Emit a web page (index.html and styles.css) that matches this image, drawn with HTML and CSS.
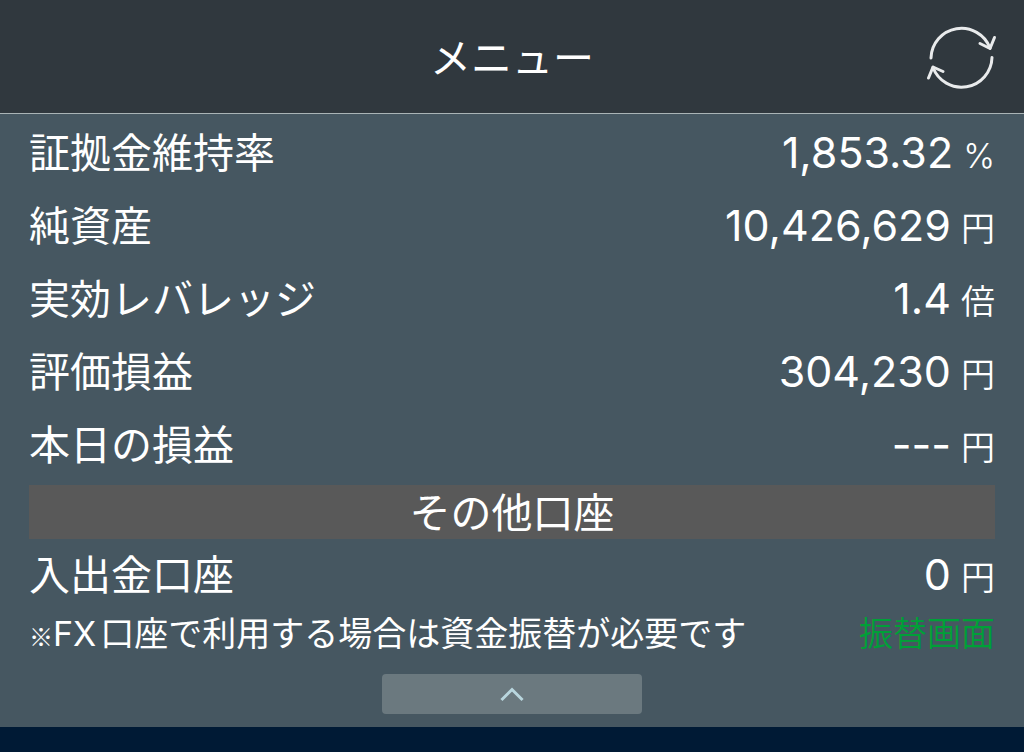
FILE: index.html
```
<!DOCTYPE html>
<html lang="ja">
<head>
    <meta charset="UTF-8">
    <meta name="viewport" content="width=device-width, initial-scale=1.0">
    <title>メニュー</title>
    <link rel="stylesheet" href="styles.css">
</head>
<body>
    <header class="header">
        <h1 class="titulo">メニュー</h1>
        <button class="refresh" type="button" aria-label="更新">
            <svg width="72" height="68" viewBox="0 0 72 68" fill="none" stroke="#e9ebec" stroke-width="3" stroke-linecap="round" stroke-linejoin="round">
                <path d="M4 35A30.500 30.500 0 0 1 63 25"/>
                <path d="M53 20.500L63 25.500L67.500 14.500"/>
                <path d="M65 34.500A30.500 30.500 0 0 1 6 44.500"/>
                <path d="M1.500 55L6 44L16 48.500"/>
            </svg>
        </button>
    </header>

    <main class="painel">
        <dl class="lista">
            <div class="linha">
                <dt>証拠金維持率</dt>
                <dd>1,853.32<span class="unidade">%</span></dd>
            </div>
            <div class="linha">
                <dt>純資産</dt>
                <dd>10,426,629<span class="unidade">円</span></dd>
            </div>
            <div class="linha">
                <dt>実効レバレッジ</dt>
                <dd>1.4<span class="unidade">倍</span></dd>
            </div>
            <div class="linha">
                <dt>評価損益</dt>
                <dd>304,230<span class="unidade">円</span></dd>
            </div>
            <div class="linha">
                <dt>本日の損益</dt>
                <dd>---<span class="unidade">円</span></dd>
            </div>
        </dl>

        <h2 class="faixa">その他口座</h2>

        <dl class="lista">
            <div class="linha">
                <dt>入出金口座</dt>
                <dd>0<span class="unidade">円</span></dd>
            </div>
        </dl>

        <div class="nota">
            <p><span class="marca">※</span><span class="latim">FX</span>口座で利用する場合は資金振替が必要です</p>
            <a href="#">振替画面</a>
        </div>

        <button class="fechar" type="button" aria-label="閉じる">
            <svg width="26" height="16" viewBox="0 0 26 16" fill="none" stroke="#b9d6de" stroke-width="3" stroke-linecap="square">
                <path d="M3.500 13L13 3.500L22.500 13"/>
            </svg>
        </button>
    </main>
</body>
</html>
```
FILE: styles.css
```
* {
box-sizing: border-box;
}

body {
background-color: #001a35;
color: #fff;
font-family: 'Noto Sans CJK JP', sans-serif;
font-weight: 400;
margin: 0;
min-height: 100vh;
}

h1, h2, p, dl, dd {
font-weight: inherit;
margin: 0;
}

button {
border: none;
cursor: pointer;
padding: 0;
}

button svg {
display: block;
}

.header {
align-items: center;
background-color: #30383e;
border-bottom: 1px solid #aab4b6;
display: grid;
grid-template-columns: 1fr auto 1fr;
height: 114px;
padding: 0 25px;
}

.titulo {
font-size: 41px;
grid-column: 2;
line-height: 60px;
padding-bottom: 4px;
}

.refresh {
background: none;
justify-self: end;
}

.painel {
background-color: #465761;
padding: 3px 29px 13px;
}

.linha {
align-items: baseline;
display: flex;
height: 73px;
justify-content: space-between;
padding-top: 3px;
}

dt {
font-size: 41px;
line-height: 60px;
}

dd {
align-items: baseline;
display: flex;
font-family: Inter, 'Noto Sans CJK JP', sans-serif;
font-size: 43px;
gap: 10px;
line-height: 60px;
}

.unidade {
font-size: 34px;
font-weight: 350;
}

.faixa {
background-color: #595959;
font-size: 41px;
height: 54px;
line-height: 50px;
margin-top: 3px;
text-align: center;
}

.nota {
align-items: baseline;
display: flex;
font-size: 34px;
justify-content: space-between;
line-height: 40px;
}

.marca {
font-size: 24px;
}

.latim {
font-family: Inter, sans-serif;
margin-right: 4px;
}

.nota a {
color: #00a038;
font-weight: 350;
text-decoration: none;
}

.fechar {
align-items: center;
background-color: #6b797f;
border-radius: 4px;
display: flex;
height: 40px;
justify-content: center;
margin: 18px auto 0;
width: 27%;
}
```
